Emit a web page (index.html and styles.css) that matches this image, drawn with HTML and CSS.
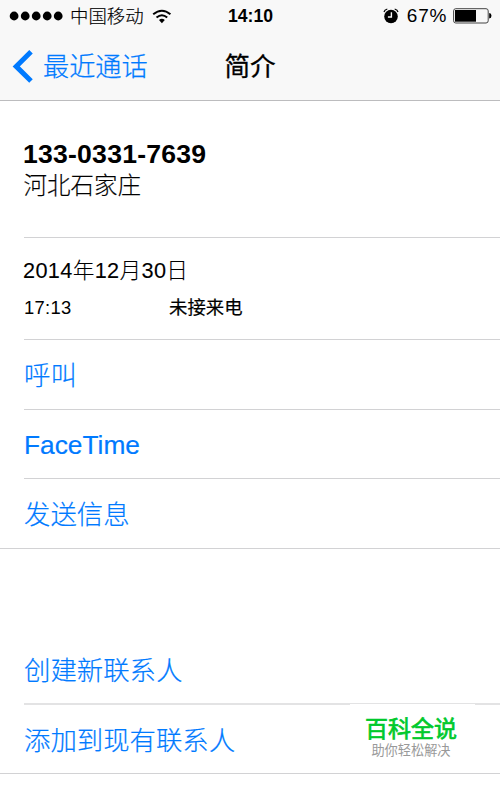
FILE: index.html
```html
<!DOCTYPE html>
<html lang="zh-CN">
<head>
<meta charset="utf-8">
<title>简介</title>
<link rel="stylesheet" href="styles.css">
</head>
<body>
<header class="header">
  <div class="status">
    <div class="carrier">
      <svg class="signal" width="54" height="10" viewBox="0 0 54 10"><circle cx="5.1" cy="5" r="4.4"/><circle cx="16.2" cy="5" r="4.4"/><circle cx="27.2" cy="5" r="4.4"/><circle cx="38.2" cy="5" r="4.4"/><circle cx="49.2" cy="5" r="4.4"/></svg>
      <span class="carrier-name">中国移动</span>
      <svg class="wifi" width="20" height="15" viewBox="0 0 20 15"><path d="M1.2 5.3Q10-1.8 18.4 5.3M4.5 8.5Q10 4 15.2 8.5" fill="none" stroke="#000" stroke-width="2"/><path d="M7 11Q9.9 8.6 12.8 11L9.9 14.2Z"/></svg>
    </div>
    <div class="clock">14:10</div>
    <div class="power">
      <svg class="alarm" width="16" height="16" viewBox="0 0 16 16"><circle cx="8" cy="8.5" r="6.8"/><path d="M1 4Q1.5 1.7 4.3 1M15 4Q14.5 1.7 11.7 1" fill="none" stroke="#000" stroke-width="1.2"/><path d="M8.4 4.2V9H4.9" fill="none" stroke="#f8f8f8" stroke-width="1.4"/></svg>
      <span class="percent">67%</span>
      <svg class="battery" width="39" height="16" viewBox="0 0 39 16"><rect x=".6" y=".7" width="34.6" height="14.3" rx="2.2" fill="none" stroke="#444" stroke-width="1"/><rect x="2" y="2" width="21" height="11.7"/><path d="M36.2 5Q38.5 5.3 38.5 7.8T36.2 10.6Z"/></svg>
    </div>
  </div>
  <nav class="nav">
    <a class="back"><svg width="21" height="33" viewBox="0 0 21 33"><path d="M19 1.8L4.2 16.4L19 31" fill="none" stroke="#007aff" stroke-width="5"/></svg><span>最近通话</span></a>
    <h1 class="title">简介</h1>
  </nav>
</header>
<main>
  <section class="group">
    <div class="row contact"><div class="number">133-0331-7639</div><div class="place">河北石家庄</div></div>
    <div class="row call"><div class="date">2014年12月30日</div><div class="entry"><span class="time">17:13</span><span class="kind">未接来电</span></div></div>
    <a class="row action">呼叫</a>
    <a class="row action latin">FaceTime</a>
    <a class="row action last">发送信息</a>
  </section>
  <section class="group second">
    <a class="row action create">创建新联系人</a>
    <a class="row action last">添加到现有联系人</a>
  </section>
</main>
<aside class="brand"><div class="brand-name">百科全说</div><div class="brand-line">助你轻松解决</div></aside>
</body>
</html>
```
FILE: styles.css
```css
* { box-sizing: border-box; }
body {
  position: relative;
  margin: 0;
  height: 789px;
  overflow: hidden;
  background: #fff;
  color: #000;
  font-family: "Liberation Sans", "Noto Sans CJK SC", sans-serif;
}
svg { display: block; flex: none; }
.header { height: 101px; background: #f8f8f8; border-bottom: 1px solid #bcbcbe; }
.status {
  display: grid;
  grid-template-columns: 1fr auto 1fr;
  align-items: center;
  height: 32px;
  padding: 0 8px 0 9px;
}
.carrier, .power { display: flex; align-items: center; }
.power { justify-content: flex-end; }
.carrier-name { margin: 0 8px 0 7px; padding-top: 1px; font-size: 18.4px; font-weight: 300; line-height: 31px; -webkit-text-stroke: .15px #000; }
.clock { font-size: 17.6px; font-weight: bold; }
.percent { margin: 0 6px 0 8px; font-size: 19px; letter-spacing: .7px; }
.nav { display: grid; grid-template-columns: 1fr auto 1fr; align-items: center; height: 70px; padding: 0 12px; }
.back { display: flex; align-items: center; gap: 10px; margin-top: -2px; color: #007aff; font-size: 26.2px; font-weight: 300; line-height: 36px; -webkit-text-stroke: .25px #007aff; }
.back span { padding-top: 2px; }
.title { margin: 0; font-size: 25.6px; font-weight: 400; line-height: 36px; -webkit-text-stroke: .3px #000; }
.row { display: block; margin-left: 24px; border-bottom: 1px solid #d2d2d4; }
.contact { height: 137px; padding-top: 36px; }
.number { margin-left: -1px; font-size: 26.6px; font-weight: bold; letter-spacing: .22px; line-height: 34px; }
.place { margin-left: -.5px; font-size: 23.5px; font-weight: 300; line-height: 31px; -webkit-text-stroke: .15px #000; }
.call { height: 102px; padding-top: 16px; }
.date { margin-left: -1px; font-size: 21.7px; font-weight: 300; letter-spacing: .35px; line-height: 33px; -webkit-text-stroke: .1px #000; }
.entry { display: flex; margin-top: 7px; font-size: 18.4px; line-height: 28px; }
.time { width: 145px; letter-spacing: .3px; }
.kind { -webkit-text-stroke: .2px #000; }
.action { height: 69.5px; color: #007aff; font-size: 26.4px; font-weight: 300; line-height: 72px; -webkit-text-stroke: .2px #007aff; }
.latin { font-size: 26.3px; line-height: 70px; }
.last { margin-left: 0; padding-left: 24px; }
.second { margin-top: 86.5px; }
.create { border-bottom: 2px solid #e3e3e4; }
.brand {
  position: absolute;
  left: 350px;
  top: 704px;
  width: 125px;
  height: 66px;
  padding-top: 9px;
  background: #fff;
  text-align: center;
}
.brand-name { margin-left: -3px; color: #00c92c; font-size: 23px; font-weight: 400; line-height: 32px; -webkit-text-stroke: .7px #00c92c; }
.brand-line { margin: -1px 0 0 -3px; color: #999; font-size: 13.2px; line-height: 14px; }
```
